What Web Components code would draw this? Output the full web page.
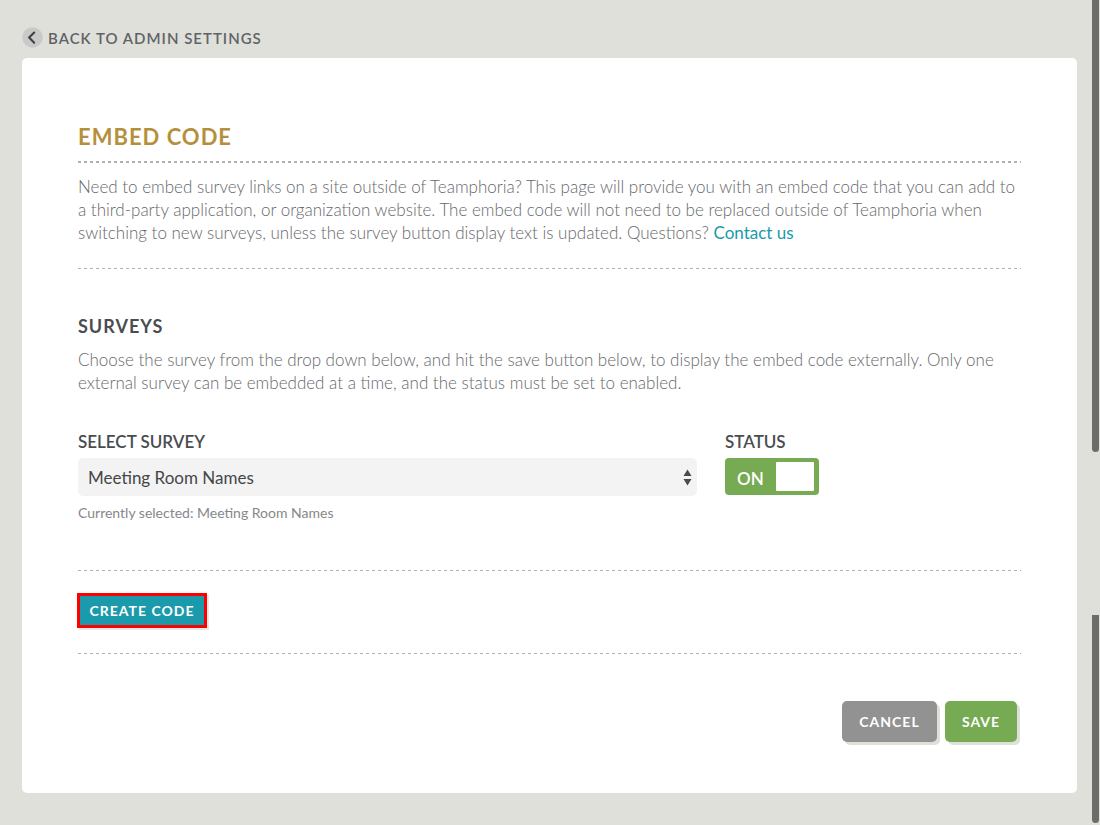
<!DOCTYPE html>
<html lang="en">
<head>
<meta charset="utf-8">
<meta name="viewport" content="width=device-width, initial-scale=1">
<title>Embed Code</title>
<style>
  body {
    margin: 0;
    background: #dfe0da;
    color: #66686b;
    font: 300 17px/23px Lato, "Open Sans", sans-serif;
  }
</style>
</head>
<body>
<admin-page>
  <back-link slot="nav" href="#settings">BACK TO ADMIN SETTINGS</back-link>
  <panel-card>
    <intro-section heading="EMBED CODE">
      Need to embed survey links on a site outside of Teamphoria? This page will provide you with an embed code that you can add to a third-party application, or organization website. The embed code will not need to be replaced outside of Teamphoria when switching to new surveys, unless the survey button display text is updated. Questions? <a href="#contact">Contact us</a>
    </intro-section>
    <survey-section heading="SURVEYS">
      Choose the survey from the drop down below, and hit the save button below, to display the embed code externally. Only one external survey can be embedded at a time, and the status must be set to enabled.
      <survey-select slot="fields" label="SELECT SURVEY" value="Meeting Room Names"></survey-select>
      <status-switch slot="fields" label="STATUS"></status-switch>
    </survey-section>
    <code-row><action-button kind="create">CREATE CODE</action-button></code-row>
    <form-actions>
      <action-button kind="cancel">CANCEL</action-button>
      <action-button kind="save">SAVE</action-button>
    </form-actions>
  </panel-card>
</admin-page>
<scroll-rail></scroll-rail>

<script>
  function define(name, render) {
    customElements.define(name, class extends HTMLElement {
      constructor() {
        super();
        this.attachShadow({ mode: "open" });
      }
      connectedCallback() {
        this.shadowRoot.innerHTML = render(this);
      }
    });
  }

  define("admin-page", () => `
    <style>
      :host { display: block; padding: 26px 23px 32px 22px; }
      nav { height: 24px; margin-bottom: 8px; display: flex; align-items: center; }
    </style>
    <nav><slot name="nav"></slot></nav>
    <main><slot></slot></main>`);

  define("back-link", el => `
    <style>
      :host { display: block; }
      a { display: flex; align-items: center; gap: 5px; color: #5f6366; text-decoration: none;
          font-size: 15px; font-weight: 600; letter-spacing: 1px; line-height: 22px; }
      svg { display: block; margin-bottom: 2px; }
    </style>
    <a href="${el.getAttribute("href")}">
      <svg width="21" height="21" viewBox="0 0 21 21" aria-hidden="true">
        <circle cx="10.5" cy="10.5" r="10.2" fill="#c9c9c9"/>
        <path d="M12.2 5.5 7.1 10.6l5.1 5.1" fill="none" stroke="#3f4144" stroke-width="2.1" stroke-linecap="round" stroke-linejoin="round"/>
      </svg>
      <slot></slot>
    </a>`);

  define("panel-card", () => `
    <style>
      :host { display: block; background: #fff; border-radius: 5px; padding: 63px 56px 51px; }
    </style>
    <slot></slot>`);

  define("dashed-rule", () => `
    <style>
      :host { display: block; height: 1px;
        background: repeating-linear-gradient(90deg, var(--rule, #b0b0b0) 0 3px, transparent 3px 6px); }
    </style>`);

  define("intro-section", el => `
    <style>
      :host { display: block; }
      h1 { margin: 0 0 8px; color: #b5903c; font-size: 22px; font-weight: 700; line-height: 32px; letter-spacing: 1px; }
      .top { height: 2px; --rule: #b0b0b0; }
      p { margin: 12px 0 24px; }
      ::slotted(a) { color: #1a9aaa; font-weight: 400; text-decoration: none; }
    </style>
    <h1>${el.getAttribute("heading")}</h1>
    <dashed-rule class="top"></dashed-rule>
    <p><slot></slot></p>
    <dashed-rule></dashed-rule>`);

  define("survey-section", el => `
    <style>
      :host { display: block; padding-top: 45px; }
      h2 { margin: 0 0 10px; color: #4a4d50; font-size: 18px; font-weight: 700; line-height: 24px; letter-spacing: 1px; }
      p { margin: 0 0 35px; }
      .fields { display: grid; grid-template-columns: 619fr 296fr; gap: 28px; align-items: start; margin-bottom: 46px; }
    </style>
    <h2>${el.getAttribute("heading")}</h2>
    <p><slot></slot></p>
    <div class="fields"><slot name="fields"></slot></div>
    <dashed-rule></dashed-rule>`);

  define("survey-select", el => `
    <style>
      :host { display: block; }
      label { display: block; color: #4a4d50; font-size: 17px; font-weight: 600; line-height: 26px; margin-bottom: 3px; }
      .box { position: relative; }
      select { appearance: none; display: block; box-sizing: border-box; width: 100%; height: 38px; margin: 0;
        padding: 0 32px 0 10px; border: 0; border-radius: 5px; background: #f3f3f3; color: #444648;
        font: inherit; font-weight: 400; font-size: 17px; }
      svg { position: absolute; right: 5px; top: 11px; pointer-events: none; }
      small { display: block; margin-top: 6px; color: #85888b; font-size: 14px; font-weight: 400; line-height: 22px; }
    </style>
    <label for="survey">${el.getAttribute("label")}</label>
    <div class="box">
      <select id="survey" aria-describedby="note"><option>${el.getAttribute("value")}</option></select>
      <svg width="9" height="17" viewBox="0 0 9 17" aria-hidden="true"><path d="M0.5 7 4.5 0.5 8.5 7zM0.5 10h8l-4 6.5z" fill="#4a4a4a"/></svg>
    </div>
    <small id="note">Currently selected: ${el.getAttribute("value")}</small>`);

  define("status-switch", el => `
    <style>
      :host { display: block; }
      .name { display: block; color: #4a4d50; font-size: 17px; font-weight: 600; line-height: 26px; margin-bottom: 3px; }
      .track { position: relative; display: flex; align-items: center; justify-content: space-between; box-sizing: border-box;
        width: 94px; height: 37px; padding: 4px 5px 4px 12px; border-radius: 4px; background: #76ab53;
        color: #fff; font-size: 17px; font-weight: 600; cursor: pointer; }
      input { position: absolute; inset: 0; width: 100%; height: 100%; margin: 0; opacity: 0; }
      .text { padding-top: 3px; }
      .knob { width: 38px; height: 29px; background: #fff; border-radius: 1px; }
    </style>
    <label class="name" for="status">${el.getAttribute("label")}</label>
    <div class="track">
      <span class="text">ON</span><span class="knob"></span>
      <input id="status" type="checkbox" role="switch" checked>
    </div>`);

  define("code-row", () => `
    <style>
      :host { display: block; }
      .row { display: flex; padding: 22px 0 25px; margin-left: -1px; }
    </style>
    <div class="row"><slot></slot></div>
    <dashed-rule></dashed-rule>`);

  define("form-actions", () => `
    <style>
      :host { display: flex; justify-content: flex-end; gap: 8px; padding: 47px 4px 0 0; }
    </style>
    <slot></slot>`);

  define("action-button", el => `
    <style>
      :host { display: block; }
      button { display: block; box-sizing: border-box; margin: 0; border: 0; border-radius: 5px; height: 41px;
        padding: 0 15px; color: #fff; font: inherit; font-size: 14px; font-weight: 700; letter-spacing: 1px;
        box-shadow: 3px 3px 0 #dfe0da; cursor: pointer; }
      .cancel { background: #929292; min-width: 95px; }
      .save { background: #76ab53; min-width: 72px; }
      .create { background: #1a9aaa; border: 3px solid #fe0000; border-radius: 0; height: 35px; min-width: 130px;
        padding: 0 8px; box-shadow: 2px 2px 0 #e6e9e6; }
    </style>
    <button type="button" class="${el.getAttribute("kind")}"><slot></slot></button>`);

  define("scroll-rail", () => `
    <style>
      :host { position: fixed; top: 0; right: 1px; bottom: 2px; width: 7px; display: grid; grid-template-rows: 452fr 163fr 208fr; }
      span { background: #6c6d6b; border-radius: 0 0 4px 4px; }
      .second { grid-row: 3; border-radius: 0 0 4px 4px; }
    </style>
    <span></span><span class="second"></span>`);
</script>
</body>
</html>
